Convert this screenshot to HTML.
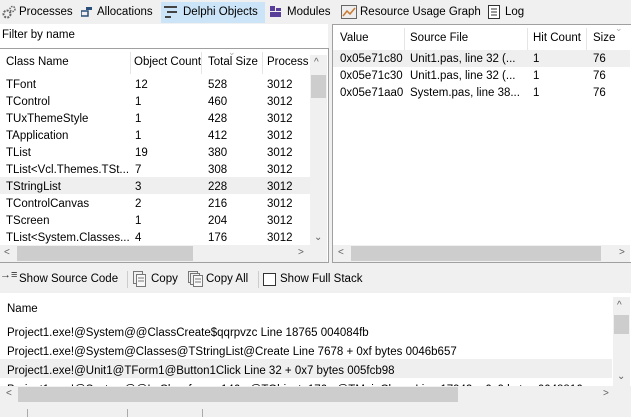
<!DOCTYPE html>
<html><head><style>
*{margin:0;padding:0;box-sizing:border-box}
body{width:631px;height:417px;overflow:hidden;background:#f0f0f0;font-family:"Liberation Sans",sans-serif;font-size:11.5px;color:#000;position:relative}
.a{position:absolute;white-space:nowrap}
.tab{position:absolute;top:2px;height:20px;line-height:20px}
.sb{position:absolute;background:#f0f0f0}
.th{background:#cdcdcd;position:absolute}
.arr{position:absolute;color:#606060;font-size:10px}
</style></head><body>
<div class="a" style="left:0;top:0;width:631px;height:24px;background:#f0f0f0"></div>
<div class="a" style="left:161px;top:2px;width:104px;height:21px;background:#cce4f7"></div>
<svg class="a" style="left:2px;top:5px" width="14" height="14"><circle cx="5" cy="9" r="3.5" fill="none" stroke="#666" stroke-width="2" stroke-dasharray="2 1.2"/><circle cx="10.5" cy="4" r="2.5" fill="none" stroke="#666" stroke-width="1.5" stroke-dasharray="1.5 1"/></svg>
<div class="tab" style="left:19px">Processes</div>
<svg class="a" style="left:81px;top:6px" width="12" height="12"><rect x="0" y="5" width="7" height="5" fill="none" stroke="#2a4f7a" stroke-width="1.5"/><rect x="5" y="1" width="6" height="3" fill="#2a4f7a"/></svg>
<div class="tab" style="left:97px">Allocations</div>
<svg class="a" style="left:164px;top:6px" width="14" height="12"><rect x="0" y="0" width="13" height="2" fill="#444"/><rect x="3" y="5" width="10" height="2" fill="#444"/><rect x="1" y="10" width="6" height="2" fill="#444"/></svg>
<div class="tab" style="left:183px">Delphi Objects</div>
<svg class="a" style="left:270px;top:6px" width="12" height="12"><rect x="0" y="0" width="5" height="5" fill="#5a3f9a"/><rect x="6" y="2" width="5" height="3" fill="#5a3f9a"/><rect x="0" y="6" width="11" height="5" fill="#5a3f9a"/></svg>
<div class="tab" style="left:287px">Modules</div>
<svg class="a" style="left:341px;top:5px" width="16" height="14"><rect x="0.5" y="0.5" width="15" height="13" fill="#eee" stroke="#666"/><polyline points="2,11 6,6 9,9 14,3" fill="none" stroke="#c87a30" stroke-width="1.5"/></svg>
<div class="tab" style="left:360px">Resource Usage Graph</div>
<svg class="a" style="left:488px;top:5px" width="12" height="14"><rect x="0.5" y="0.5" width="11" height="13" fill="#fff" stroke="#333"/><line x1="3" y1="4" x2="9" y2="4" stroke="#333"/><line x1="3" y1="7" x2="9" y2="7" stroke="#333"/><line x1="3" y1="10" x2="9" y2="10" stroke="#333"/></svg>
<div class="tab" style="left:505px">Log</div>

<div class="a" style="left:0;top:24px;width:328px;height:24px;background:#fff"></div>
<div class="a" style="left:2px;top:29px">Filter by name</div>

<div class="a" style="left:0;top:48px;width:329px;height:215px;background:#fff;border:1px solid #a0a0a0;border-left:none"></div>
<div class="a" style="left:130px;top:52px;width:1px;height:22px;background:#e5e5e5"></div>
<div class="a" style="left:201px;top:52px;width:1px;height:22px;background:#e5e5e5"></div>
<div class="a" style="left:262px;top:52px;width:1px;height:22px;background:#e5e5e5"></div>
<div class="a" style="left:228px;top:47px;color:#aaa;font-size:9px">&#8964;</div>
<div class="a" style="left:6px;top:56px">Class Name</div>
<div class="a" style="left:134px;top:56px">Object Count</div>
<div class="a" style="left:208px;top:56px">Total Size</div>
<div class="a" style="left:267px;top:56px">Process</div>
<div class="a" style="left:0;top:177px;width:310px;height:17px;background:#efefef"></div>
<div class="a" style="left:6px;top:77px;line-height:17px">TFont<br>TControl<br>TUxThemeStyle<br>TApplication<br>TList<br>TList&lt;Vcl.Themes.TSt...<br>TStringList<br>TControlCanvas<br>TScreen<br>TList&lt;System.Classes...</div>
<div class="a" style="left:135px;top:77px;line-height:17px">12<br>1<br>1<br>1<br>19<br>7<br>3<br>2<br>1<br>4</div>
<div class="a" style="left:208px;top:77px;line-height:17px">528<br>460<br>428<br>412<br>380<br>308<br>228<br>216<br>204<br>176</div>
<div class="a" style="left:267px;top:77px;line-height:17px">3012<br>3012<br>3012<br>3012<br>3012<br>3012<br>3012<br>3012<br>3012<br>3012</div>
<div class="sb" style="left:310px;top:55px;width:17px;height:190px"></div>
<div class="th" style="left:311px;top:75px;width:15px;height:23px"></div>
<div class="arr" style="left:314px;top:57px">&#94;</div>
<div class="arr" style="left:314px;top:232px">&#8964;</div>
<div class="sb" style="left:0;top:245px;width:327px;height:17px"></div>
<div class="th" style="left:17px;top:246px;width:176px;height:15px"></div>
<div class="arr" style="left:4px;top:247px">&lt;</div>
<div class="arr" style="left:298px;top:247px">&gt;</div>

<div class="a" style="left:332px;top:24px;width:300px;height:239px;background:#fff;border:1px solid #a0a0a0"></div>
<div class="a" style="left:404px;top:28px;width:1px;height:22px;background:#e5e5e5"></div>
<div class="a" style="left:527px;top:28px;width:1px;height:22px;background:#e5e5e5"></div>
<div class="a" style="left:586px;top:28px;width:1px;height:22px;background:#e5e5e5"></div>
<div class="a" style="left:615px;top:23px;color:#aaa;font-size:9px">&#8964;</div>
<div class="a" style="left:340px;top:32px">Value</div>
<div class="a" style="left:410px;top:32px">Source File</div>
<div class="a" style="left:533px;top:32px">Hit Count</div>
<div class="a" style="left:593px;top:32px">Size</div>
<div class="a" style="left:333px;top:50px;width:297px;height:17px;background:#efefef"></div>
<div class="a" style="left:340px;top:51px;line-height:17px">0x05e71c80<br>0x05e71c30<br>0x05e71aa0</div>
<div class="a" style="left:410px;top:51px;line-height:17px">Unit1.pas, line 32 (...<br>Unit1.pas, line 32 (...<br>System.pas, line 38...</div>
<div class="a" style="left:533px;top:51px;line-height:17px">1<br>1<br>1</div>
<div class="a" style="left:593px;top:51px;line-height:17px">76<br>76<br>76</div>
<div class="sb" style="left:333px;top:245px;width:297px;height:17px"></div>
<div class="th" style="left:351px;top:246px;width:250px;height:15px"></div>
<div class="arr" style="left:338px;top:247px">&lt;</div>
<div class="arr" style="left:619px;top:247px">&gt;</div>

<div class="a" style="left:0;top:269px;font-size:11px;color:#333">&#8594;&#8801;</div>
<div class="a" style="left:19px;top:273px">Show Source Code</div>
<div class="a" style="left:127px;top:271px;width:1px;height:17px;background:#ccc"></div>
<svg class="a" style="left:133px;top:271px" width="14" height="16"><rect x="0.5" y="0.5" width="9" height="12" fill="#f0f0f0" stroke="#777"/><rect x="3.5" y="3.5" width="9" height="12" fill="#f8f8f8" stroke="#777"/><line x1="5" y1="7" x2="11" y2="7" stroke="#777"/><line x1="5" y1="10" x2="11" y2="10" stroke="#777"/></svg>
<div class="a" style="left:151px;top:273px">Copy</div>
<svg class="a" style="left:188px;top:271px" width="16" height="16"><rect x="0.5" y="0.5" width="9" height="11" fill="#f0f0f0" stroke="#777"/><rect x="2.5" y="2.5" width="9" height="11" fill="#f0f0f0" stroke="#777"/><rect x="5.5" y="4.5" width="9" height="11" fill="#f8f8f8" stroke="#777"/><line x1="7" y1="8" x2="13" y2="8" stroke="#777"/><line x1="7" y1="11" x2="13" y2="11" stroke="#777"/></svg>
<div class="a" style="left:206px;top:273px">Copy All</div>
<div class="a" style="left:258px;top:271px;width:1px;height:17px;background:#ccc"></div>
<div class="a" style="left:263px;top:273px;width:13px;height:13px;border:1px solid #333;background:#fff"></div>
<div class="a" style="left:280px;top:273px">Show Full Stack</div>

<div class="a" style="left:0;top:293px;width:631px;height:110px;background:#fff"></div>
<div class="a" style="left:7px;top:303px">Name</div>
<div class="a" style="left:0;top:359px;width:612px;height:19px;background:#efefef"></div>
<div class="a" style="left:7px;top:324px;line-height:19px">Project1.exe!@System@@ClassCreate$qqrpvzc Line 18765 004084fb<br>Project1.exe!@System@Classes@TStringList@Create Line 7678 + 0xf bytes 0046b657<br>Project1.exe!@Unit1@TForm1@Button1Click Line 32 + 0x7 bytes 005fcb98<br>Project1.exe!@System@@LsClassfrom...146...@TObject..176...@TMainClass..Line 17942 + 0x9 bytes 0048816</div>
<div class="sb" style="left:613px;top:297px;width:17px;height:89px"></div>
<div class="th" style="left:614px;top:315px;width:15px;height:19px"></div>
<div class="arr" style="left:617px;top:300px">&#94;</div>
<div class="arr" style="left:617px;top:371px">&#8964;</div>
<div class="sb" style="left:0;top:386px;width:631px;height:17px"></div>
<div class="th" style="left:18px;top:387px;width:440px;height:15px"></div>
<div class="arr" style="left:6px;top:388px">&lt;</div>
<div class="arr" style="left:603px;top:388px">&gt;</div>
<div class="a" style="left:0;top:403px;width:631px;height:14px;background:#f0f0f0"></div>
<div class="a" style="left:27px;top:409px;width:1px;height:8px;background:#aaa"></div>
<div class="a" style="left:127px;top:409px;width:1px;height:8px;background:#aaa"></div>
<div class="a" style="left:202px;top:409px;width:1px;height:8px;background:#aaa"></div>
</body></html>
